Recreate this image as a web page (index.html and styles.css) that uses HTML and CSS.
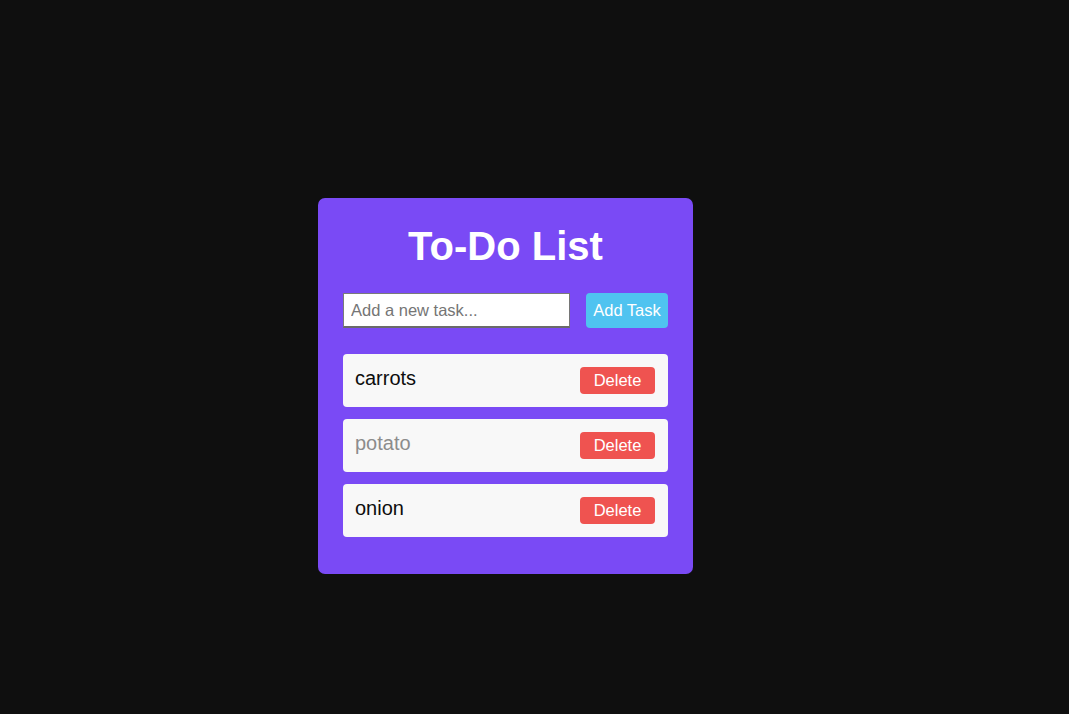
FILE: index.html
```html
<!DOCTYPE html>
<html>
<head>
<meta charset="utf-8">
<link rel="stylesheet" href="styles.css">
<title>To-Do List</title>
</head>
<body>
<div class="page">
  <div class="card">
    <h1 class="title">To-Do List</h1>
    <div class="add-row">
      <input class="task-input" type="text" placeholder="Add a new task...">
      <button class="add-btn">Add Task</button>
    </div>
    <ul class="list">
      <li class="item"><span class="item-text">carrots</span><button class="del-btn">Delete</button></li>
      <li class="item"><span class="item-text done">potato</span><button class="del-btn">Delete</button></li>
      <li class="item"><span class="item-text">onion</span><button class="del-btn">Delete</button></li>
    </ul>
  </div>
</div>
</body>
</html>
```
FILE: styles.css
```css
html, body {
  margin: 0;
  padding: 0;
  background: #0f0f0f;
  font-family: "Liberation Sans", Arial, sans-serif;
}
.page {
  padding: 198px 0 0 318px;
  min-height: 100vh;
  box-sizing: border-box;
}
.card {
  width: 375px;
  box-sizing: border-box;
  background: #7a4af5;
  border-radius: 7px;
  padding: 25px;
}
.title {
  margin: 0 0 24px 0;
  text-align: center;
  color: #ffffff;
  font-size: 40px;
  font-weight: bold;
  line-height: 46px;
}
.add-row {
  display: flex;
  gap: 16px;
  margin-bottom: 26px;
}
.task-input {
  flex: 1;
  min-width: 0;
  height: 35px;
  box-sizing: border-box;
  padding: 0 7px;
  font-family: "Liberation Sans", Arial, sans-serif;
  font-size: 16.5px;
  background: #ffffff;
  border-style: solid;
  border-width: 1px 1px 2px 1px;
  border-color: #7a7a7a #767676 #6a6a6a #7a7a7a;
  outline: none;
}
.task-input::placeholder {
  color: #757575;
}
.add-btn {
  width: 82px;
  height: 35px;
  padding: 0;
  border: none;
  border-radius: 4px;
  background: #4fc3f0;
  color: #ffffff;
  font-family: "Liberation Sans", Arial, sans-serif;
  font-size: 16.5px;
}
.list {
  list-style: none;
  margin: 0;
  padding: 0;
}
.item {
  display: flex;
  align-items: center;
  justify-content: space-between;
  height: 53px;
  box-sizing: border-box;
  padding: 0 13px 0 12px;
  margin-bottom: 12px;
  background: #f8f8f8;
  border-radius: 4px;
}
.item-text {
  font-size: 20px;
  line-height: 23px;
  color: #0d0d0d;
  margin-bottom: 5px;
}
.item-text.done {
  color: #8c8c8c;
}
.del-btn {
  width: 75px;
  height: 27px;
  padding: 0;
  border: none;
  border-radius: 4px;
  background: #ef5350;
  color: #ffffff;
  font-family: "Liberation Sans", Arial, sans-serif;
  font-size: 16.5px;
}
```
